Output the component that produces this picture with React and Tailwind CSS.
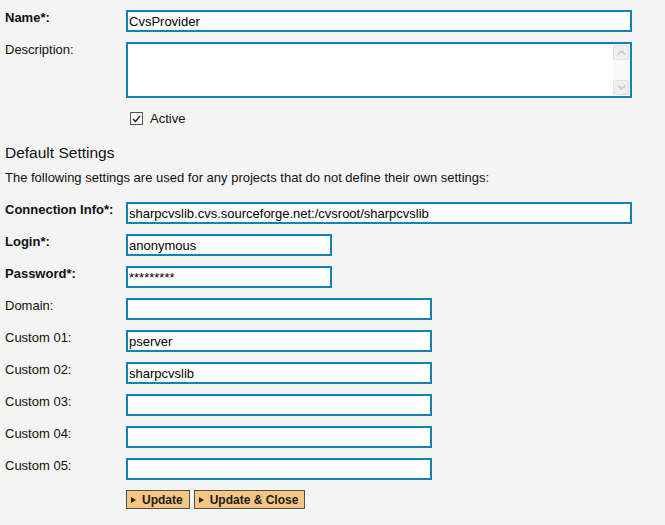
import React from 'react';

const font = { fontFamily: '"Liberation Sans", Arial, sans-serif' };

function Field({ label, bold, width, value }) {
  return (
    <div className="flex items-start">
      <div className={`w-[121px] shrink-0 text-[13px] leading-[15px] text-[#111] ${bold ? 'font-bold' : ''}`}>
        {label}
      </div>
      <input
        type="text"
        readOnly
        value={value || ''}
        className={`${width} h-[22px] border-2 border-[#1283b4] bg-white pl-px text-[13px] text-black outline-none`}
      />
    </div>
  );
}

function Button({ children }) {
  return (
    <button className="flex h-[19px] items-center gap-[6px] border border-[#4f4f4f] bg-[#f5c582] pl-[4px] pr-[6px] text-[12px] font-bold text-[#1a1a1a]">
      <svg width="5" height="6" viewBox="0 0 5 6"><path d="M0 0 L5 3 L0 6 Z" fill="#222" /></svg>
      {children}
    </button>
  );
}

export default function App() {
  return (
    <div className="min-h-[525px] w-[665px] bg-[#f4f4f4] pl-[5px] pt-[10px]" style={font}>
      <div className="flex flex-col gap-[10px]">
        <Field label="Name*:" bold width="w-[506px]" value="CvsProvider" />
        <div className="flex items-start">
          <div className="w-[121px] shrink-0 text-[13px] leading-[15px] text-[#111]">Description:</div>
          <div className="flex h-[56px] w-[506px] border-2 border-[#1283b4] bg-white">
            <div className="flex-1" />
            <div className="flex w-[17px] flex-col justify-between bg-[#fafafa] py-px">
              <div className="flex h-[15px] w-[16px] items-center justify-center rounded-[2px] border border-[#e2e2e2] bg-[#efefef]">
                <svg width="9" height="5" viewBox="0 0 9 5"><path d="M1 4.5 L4.5 1 L8 4.5" fill="none" stroke="#b7cbe6" strokeWidth="1.6" /></svg>
              </div>
              <div className="flex h-[15px] w-[16px] items-center justify-center rounded-[2px] border border-[#e2e2e2] bg-[#efefef]">
                <svg width="9" height="5" viewBox="0 0 9 5"><path d="M1 0.5 L4.5 4 L8 0.5" fill="none" stroke="#b7cbe6" strokeWidth="1.6" /></svg>
              </div>
            </div>
          </div>
        </div>
      </div>

      <div className="mt-[13px] flex items-center pl-[125px]">
        <span className="flex h-[13px] w-[13px] items-center justify-center border border-[#555] bg-[#f7f7f7]">
          <svg width="9" height="8" viewBox="0 0 9 8"><path d="M1 4 L3.5 6.5 L8 1" fill="none" stroke="#333" strokeWidth="1.6" /></svg>
        </span>
        <span className="ml-[7px] text-[13px] leading-[15px] text-[#111]">Active</span>
      </div>

      <h2 className="mt-[18px] text-[15.5px] leading-[17px] font-normal text-[#111]">Default Settings</h2>
      <p className="mt-[9px] text-[13px] leading-[15px] text-[#111]">
        The following settings are used for any projects that do not define their own settings:
      </p>

      <div className="mt-[17px] flex flex-col gap-[10px]">
        <Field label="Connection Info*:" bold width="w-[506px]" value="sharpcvslib.cvs.sourceforge.net:/cvsroot/sharpcvslib" />
        <Field label="Login*:" bold width="w-[206px]" value="anonymous" />
        <Field label="Password*:" bold width="w-[206px]" value="*********" />
        <Field label="Domain:" width="w-[306px]" />
        <Field label="Custom 01:" width="w-[306px]" value="pserver" />
        <Field label="Custom 02:" width="w-[306px]" value="sharpcvslib" />
        <Field label="Custom 03:" width="w-[306px]" />
        <Field label="Custom 04:" width="w-[306px]" />
        <Field label="Custom 05:" width="w-[306px]" />
      </div>

      <div className="mt-[10px] flex gap-[4px] pl-[121px]">
        <Button>Update</Button>
        <Button>Update &amp; Close</Button>
      </div>
    </div>
  );
}
